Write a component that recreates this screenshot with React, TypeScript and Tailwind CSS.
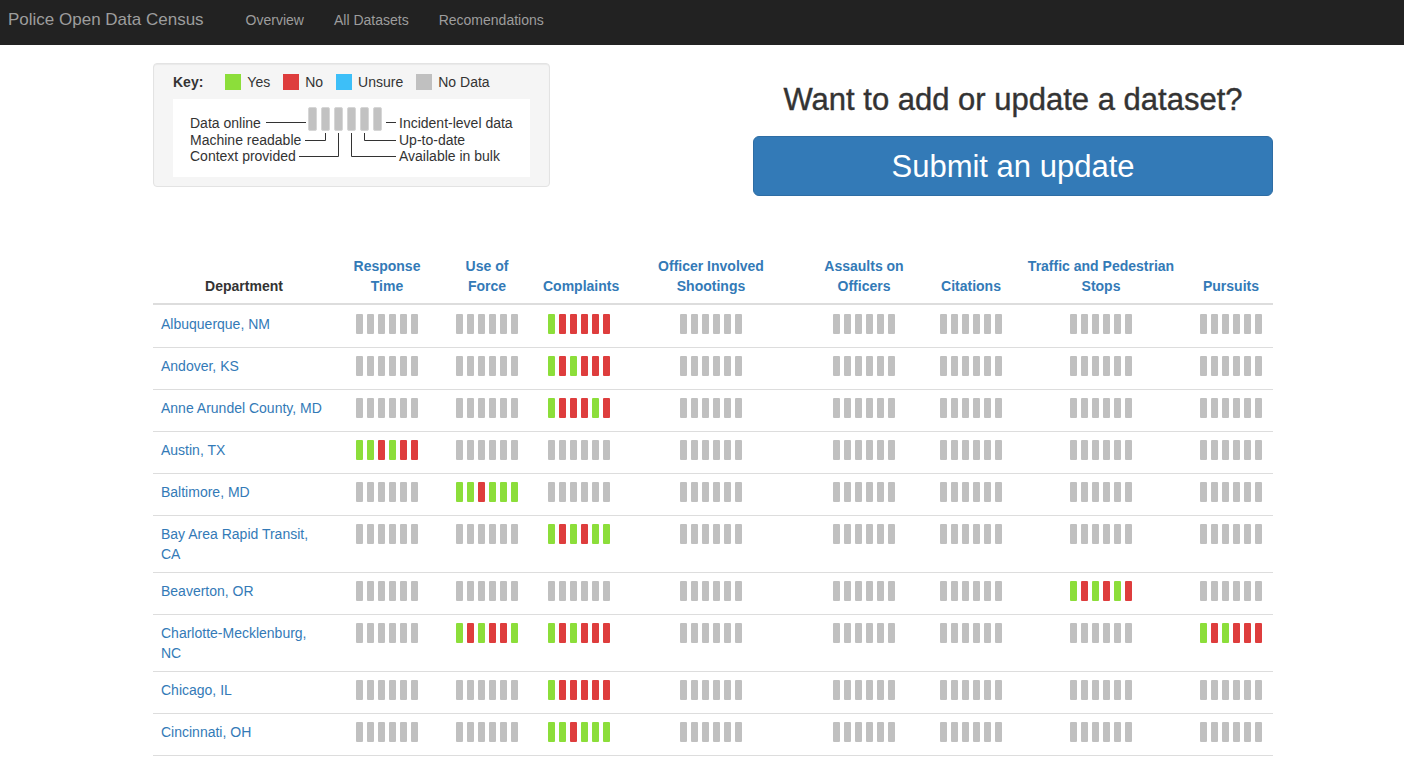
import React from "react";

type S = "y" | "n" | "u" | "g";

const GRAY = "gggggg";

const rows: { name: string; cells: string[] }[] = [
  { name: "Albuquerque, NM", cells: [GRAY, GRAY, "ynnnnn", GRAY, GRAY, GRAY, GRAY, GRAY] },
  { name: "Andover, KS", cells: [GRAY, GRAY, "ynynnn", GRAY, GRAY, GRAY, GRAY, GRAY] },
  { name: "Anne Arundel County, MD", cells: [GRAY, GRAY, "ynnnyn", GRAY, GRAY, GRAY, GRAY, GRAY] },
  { name: "Austin, TX", cells: ["yynynn", GRAY, GRAY, GRAY, GRAY, GRAY, GRAY, GRAY] },
  { name: "Baltimore, MD", cells: [GRAY, "yynyyy", GRAY, GRAY, GRAY, GRAY, GRAY, GRAY] },
  { name: "Bay Area Rapid Transit, CA", cells: [GRAY, GRAY, "ynynyy", GRAY, GRAY, GRAY, GRAY, GRAY] },
  { name: "Beaverton, OR", cells: [GRAY, GRAY, GRAY, GRAY, GRAY, GRAY, "ynynyn", GRAY] },
  { name: "Charlotte-Mecklenburg, NC", cells: [GRAY, "ynynny", "ynynnn", GRAY, GRAY, GRAY, GRAY, "ynynnn"] },
  { name: "Chicago, IL", cells: [GRAY, GRAY, "ynnnnn", GRAY, GRAY, GRAY, GRAY, GRAY] },
  { name: "Cincinnati, OH", cells: [GRAY, GRAY, "yynyyy", GRAY, GRAY, GRAY, GRAY, GRAY] },
];

const headers: { lines: string[]; w: string }[] = [
  { lines: ["Response", "Time"], w: "w-[104px]" },
  { lines: ["Use of", "Force"], w: "w-[96px]" },
  { lines: ["Complaints"], w: "w-[88px]" },
  { lines: ["Officer Involved", "Shootings"], w: "w-[176px]" },
  { lines: ["Assaults on", "Officers"], w: "w-[130px]" },
  { lines: ["Citations"], w: "w-[84px]" },
  { lines: ["Traffic and Pedestrian", "Stops"], w: "w-[176px]" },
  { lines: ["Pursuits"], w: "w-[84px]" },
];

function barClass(s: S) {
  if (s === "y") return "bg-[#8cde3a]";
  if (s === "n") return "bg-[#de3d3d]";
  if (s === "u") return "bg-[#3dbff8]";
  return "bg-[#c0c0c0]";
}

function Bars({ code }: { code: string }) {
  return (
    <div className="flex h-[25px] items-start justify-center gap-[4px]">
      {code.split("").map((c, i) => (
        <span key={i} className={`block h-[20px] w-[7px] rounded-[1px] ${barClass(c as S)}`} />
      ))}
    </div>
  );
}

function KeyDiagram() {
  const bars = [0, 1, 2, 3, 4, 5];
  const stroke = "#333";
  return (
    <svg width="357" height="78" viewBox="0 0 357 78" className="block">
      {bars.map((i) => (
        <rect
          key={i}
          x={135.5 + 13 * i}
          y={8.5}
          width={8}
          height={23}
          rx={1.5}
          fill="#c2c2c2"
          stroke="#d6d6d6"
          strokeWidth={1}
        />
      ))}
      <g stroke={stroke} strokeWidth={1} fill="none">
        <path d="M93 23.5H133" />
        <path d="M132 41.5H152.5V34" />
        <path d="M126 57.5H165.5V34" />
        <path d="M213 23.5H223" />
        <path d="M223 41.5H191.5V34" />
        <path d="M223 57.5H178.5V34" />
      </g>
      <g fill="#333" fontSize="14" fontFamily="'Liberation Sans', Arial, sans-serif">
        <text x="17" y="28.5">Data online</text>
        <text x="17" y="45.5">Machine readable</text>
        <text x="17" y="61.5">Context provided</text>
        <text x="226" y="28.5">Incident-level data</text>
        <text x="226" y="45.5">Up-to-date</text>
        <text x="226" y="61.5">Available in bulk</text>
      </g>
    </svg>
  );
}

function Swatch({ color, label }: { color: string; label: string }) {
  return (
    <div className="flex items-center">
      <span className={`block h-[16px] w-[16px] ${color}`} />
      <span className="ml-[6px]">{label}</span>
    </div>
  );
}

export default function App() {
  return (
    <div className="min-h-screen bg-white text-[14px] leading-[20px] text-[#333]" style={{ fontFamily: "'Liberation Sans', Arial, Helvetica, sans-serif" }}>
      <nav className="flex h-[45px] items-center bg-[#222] pb-[5px] text-[#9d9d9d]">
        <span className="ml-[8px] text-[17px] leading-[20px]">Police Open Data Census</span>
        <span className="ml-[42px]">Overview</span>
        <span className="ml-[30px]">All Datasets</span>
        <span className="ml-[30px]">Recomendations</span>
      </nav>

      <div className="ml-[153px] w-[1120px]">
        <div className="flex items-start justify-between">
          <div className="mt-[18px] w-[397px] rounded-[4px] border border-[#e3e3e3] bg-[#f5f5f5] px-[19px] pb-[9px] pt-[8px] shadow-[inset_0_1px_1px_rgba(0,0,0,0.05)]">
            <div className="flex h-[20px] items-center">
              <span className="font-bold">Key:</span>
              <div className="ml-[22px] flex items-center gap-[13px]">
                <Swatch color="bg-[#8cde3a]" label="Yes" />
                <Swatch color="bg-[#de3d3d]" label="No" />
                <Swatch color="bg-[#3dbff8]" label="Unsure" />
                <Swatch color="bg-[#c0c0c0]" label="No Data" />
              </div>
            </div>
            <div className="mt-[7px] h-[78px] bg-white">
              <KeyDiagram />
            </div>
          </div>

          <div className="w-[520px] pt-[38px]">
            <h2 className="text-center text-[31px] font-medium leading-[34px] text-[#333] [-webkit-text-stroke:0.4px_#333]">
              Want to add or update a dataset?
            </h2>
            <button className="mt-[19px] flex h-[60px] w-full items-center justify-center rounded-[6px] border border-[#2e6da4] bg-[#337ab7] pt-[1px] text-[31px] leading-[33px] text-white">
              Submit an update
            </button>
          </div>
        </div>

        <table className="mt-[52px] w-[1120px] table-fixed border-separate border-spacing-0">
          <thead>
            <tr>
              <th className="w-[182px] border-b-2 border-[#ddd] px-[8px] pb-[7px] pt-[8px] text-center align-bottom font-bold text-[#333]">
                Department
              </th>
              {headers.map((h, i) => (
                <th
                  key={i}
                  className={`${h.w} border-b-2 border-[#ddd] px-[8px] pb-[7px] pt-[8px] text-center align-bottom font-bold text-[#337ab7]`}
                >
                  {h.lines.map((l, j) => (
                    <div key={j}>{l}</div>
                  ))}
                </th>
              ))}
            </tr>
          </thead>
          <tbody>
            {rows.map((r, ri) => {
              const first = ri === 0;
              const last = ri === rows.length - 1;
              const cellCls = `${first ? "pt-[9px]" : "border-t border-[#ddd] pt-[8px]"} ${last ? "border-b border-[#ddd]" : ""} px-[8px] pb-[8px] align-top`;
              return (
                <tr key={ri}>
                  <td className={`${cellCls} text-[#337ab7]`}>{r.name}</td>
                  {r.cells.map((c, ci) => (
                    <td key={ci} className={cellCls}>
                      <Bars code={c} />
                    </td>
                  ))}
                </tr>
              );
            })}
          </tbody>
        </table>
      </div>
    </div>
  );
}
